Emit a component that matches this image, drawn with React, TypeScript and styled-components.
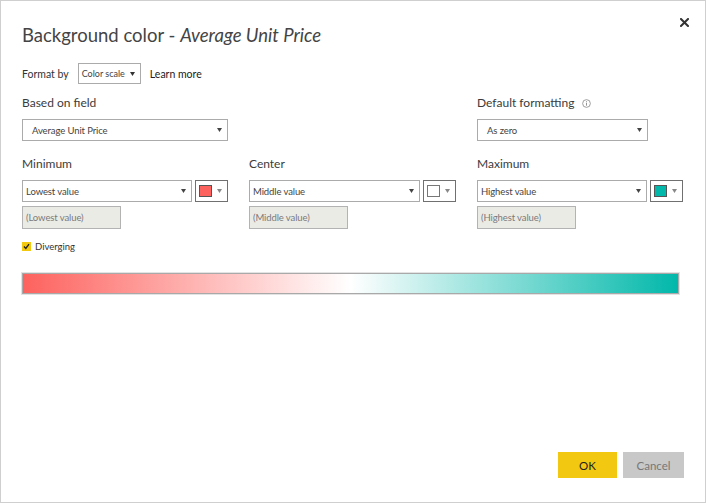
import React from "react";
import styled, { createGlobalStyle } from "styled-components";

const Global = createGlobalStyle`
  html, body { margin: 0; padding: 0; background: #fff; }
  * { box-sizing: border-box; }
  body { font-family: "Segoe UI", Lato, "Open Sans", sans-serif; color: #333; }
`;

const Dialog = styled.div`
  width: 706px;
  height: 503px;
  border: 1px solid #cfcfcf;
  background: #fff;
  position: relative;
  display: flex;
  flex-direction: column;
  padding: 21px 21px 24px 21px;
`;

const CloseButton = styled.button`
  position: absolute;
  top: 14px;
  right: 14px;
  width: 14px;
  height: 14px;
  padding: 0;
  border: 0;
  background: transparent;
  display: flex;
  align-items: center;
  justify-content: center;
`;

const Title = styled.h1`
  margin: 0;
  font-size: 18.5px;
  font-weight: 400;
  line-height: 26px;
  color: #444;
  em { font-style: italic; }
`;

const FormatRow = styled.div`
  display: flex;
  align-items: center;
  margin-top: 15px;
  height: 21px;
  font-size: 10.5px;
  color: #333;
`;

const FormatLabel = styled.span`
  margin-right: 9px;
`;

const SmallSelect = styled.div`
  height: 21px;
  border: 1px solid #ababab;
  display: flex;
  align-items: center;
  padding: 0 5px 0 3px;
  font-size: 9px;
  color: #444;
  gap: 5px;
`;

const LearnMore = styled.span`
  margin-left: 9px;
  color: #222;
`;

const Grid = styled.div`
  display: grid;
  grid-template-columns: 206px 207px 207px;
  column-gap: 21px;
  margin-top: 10px;
`;

const Field = styled.div`
  display: flex;
  flex-direction: column;
`;

const Label = styled.div`
  font-size: 12px;
  line-height: 18px;
  color: #3b3b3b;
  display: flex;
  align-items: center;
  gap: 8px;
  margin-bottom: 7px;
`;

const SelectBox = styled.div<{ $w?: number; $pad?: number }>`
  width: ${(p) => (p.$w ? `${p.$w}px` : "100%")};
  height: 22px;
  border: 1px solid #ababab;
  display: flex;
  align-items: center;
  justify-content: space-between;
  padding: 0 5px 0 ${(p) => p.$pad ?? 3}px;
  font-size: 9.5px;
  letter-spacing: -0.1px;
  color: #444;
  background: #fff;
`;

const ValueRow = styled.div`
  display: flex;
  gap: 3px;
`;

const ColorButton = styled.div`
  width: 33px;
  height: 22px;
  border: 1px solid #707070;
  display: flex;
  align-items: center;
  padding-left: 3px;
  gap: 5px;
`;

const Swatch = styled.div<{ $c: string }>`
  width: 13px;
  height: 12px;
  background: ${(p) => p.$c};
  border: 1px solid ${(p) => (p.$c === "#ffffff" ? "#777" : "#555")};
`;

const DisabledInput = styled.div`
  margin-top: 4px;
  width: 99px;
  height: 23px;
  background: #ebebe6;
  border: 1px solid #b3b3b3;
  display: flex;
  align-items: center;
  padding-left: 3px;
  font-size: 9.5px;
  letter-spacing: -0.1px;
  color: #7a7a7a;
`;

const Section = styled.div`
  margin-top: 14px;
`;

const CheckRow = styled.label`
  display: flex;
  align-items: center;
  gap: 4px;
  margin-top: 11px;
  font-size: 9.5px;
  color: #333;
  height: 12px;
`;

const CheckBox = styled.span`
  width: 9px;
  height: 9px;
  background: #f2c811;
  display: flex;
  align-items: center;
  justify-content: center;
`;

const GradientBar = styled.div`
  margin-top: 21px;
  width: 657px;
  height: 21px;
  border: 1px solid #a9a9a9;
  box-shadow: 0 0 0 1px #e3e3e3;
  background: linear-gradient(to right, #fd625e 0%, #ffffff 50%, #01b8aa 100%);
`;

const Footer = styled.div`
  margin-top: auto;
  display: flex;
  justify-content: flex-end;
  gap: 6px;
`;

const Button = styled.button<{ $primary?: boolean }>`
  height: 26px;
  width: ${(p) => (p.$primary ? 59 : 61)}px;
  border: 0;
  font-family: inherit;
  font-size: 11.5px;
  background: ${(p) => (p.$primary ? "#f2c811" : "#c8c8c8")};
  color: ${(p) => (p.$primary ? "#222" : "#777")};
  padding: 0;
`;

const Arrow = ({ color = "#444", size = 5 }: { color?: string; size?: number }) => (
  <svg width={size} height={size * 0.8} viewBox="0 0 10 8">
    <polygon points="0,0 10,0 5,8" fill={color} />
  </svg>
);

const ValueSelect = ({ text, color, w }: { text: string; color: string; w: number }) => (
  <ValueRow>
    <SelectBox $w={w}>
      <span>{text}</span>
      <Arrow />
    </SelectBox>
    <ColorButton>
      <Swatch $c={color} />
      <Arrow color="#888" size={5} />
    </ColorButton>
  </ValueRow>
);

export default function App() {
  return (
    <>
      <Global />
      <Dialog>
        <CloseButton aria-label="Close">
          <svg width="9" height="9" viewBox="0 0 9 9">
            <path d="M1 1 L8 8 M8 1 L1 8" stroke="#333" strokeWidth="2" strokeLinecap="square" />
          </svg>
        </CloseButton>
        <Title>
          Background color - <em>Average Unit Price</em>
        </Title>
        <FormatRow>
          <FormatLabel>Format by</FormatLabel>
          <SmallSelect>
            <span>Color scale</span>
            <Arrow color="#333" />
          </SmallSelect>
          <LearnMore>Learn more</LearnMore>
        </FormatRow>

        <Grid>
          <Field>
            <Label>Based on field</Label>
            <SelectBox $pad={9}>
              <span>Average Unit Price</span>
              <Arrow />
            </SelectBox>
          </Field>
          <Field />
          <Field>
            <Label>
              Default formatting
              <svg width="9" height="9" viewBox="0 0 10 10">
                <circle cx="5" cy="5" r="4.3" fill="none" stroke="#888" strokeWidth="0.9" />
                <rect x="4.5" y="4.2" width="1" height="3.2" fill="#888" />
                <rect x="4.5" y="2.5" width="1" height="1" fill="#888" />
              </svg>
            </Label>
            <SelectBox $w={171} $pad={9}>
              <span>As zero</span>
              <Arrow />
            </SelectBox>
          </Field>
        </Grid>

        <Section>
          <Grid style={{ marginTop: 0 }}>
            <Field>
              <Label>Minimum</Label>
              <ValueSelect text="Lowest value" color="#fd625e" w={170} />
              <DisabledInput>(Lowest value)</DisabledInput>
            </Field>
            <Field>
              <Label>Center</Label>
              <ValueSelect text="Middle value" color="#ffffff" w={171} />
              <DisabledInput>(Middle value)</DisabledInput>
            </Field>
            <Field>
              <Label>Maximum</Label>
              <ValueSelect text="Highest value" color="#01b8aa" w={170} />
              <DisabledInput>(Highest value)</DisabledInput>
            </Field>
          </Grid>
        </Section>

        <CheckRow>
          <CheckBox>
            <svg width="7" height="7" viewBox="0 0 7 7">
              <path d="M1 3.6 L2.8 5.4 L6 1.2" stroke="#222" strokeWidth="1.4" fill="none" />
            </svg>
          </CheckBox>
          Diverging
        </CheckRow>

        <GradientBar />

        <Footer>
          <Button $primary>OK</Button>
          <Button>Cancel</Button>
        </Footer>
      </Dialog>
    </>
  );
}
